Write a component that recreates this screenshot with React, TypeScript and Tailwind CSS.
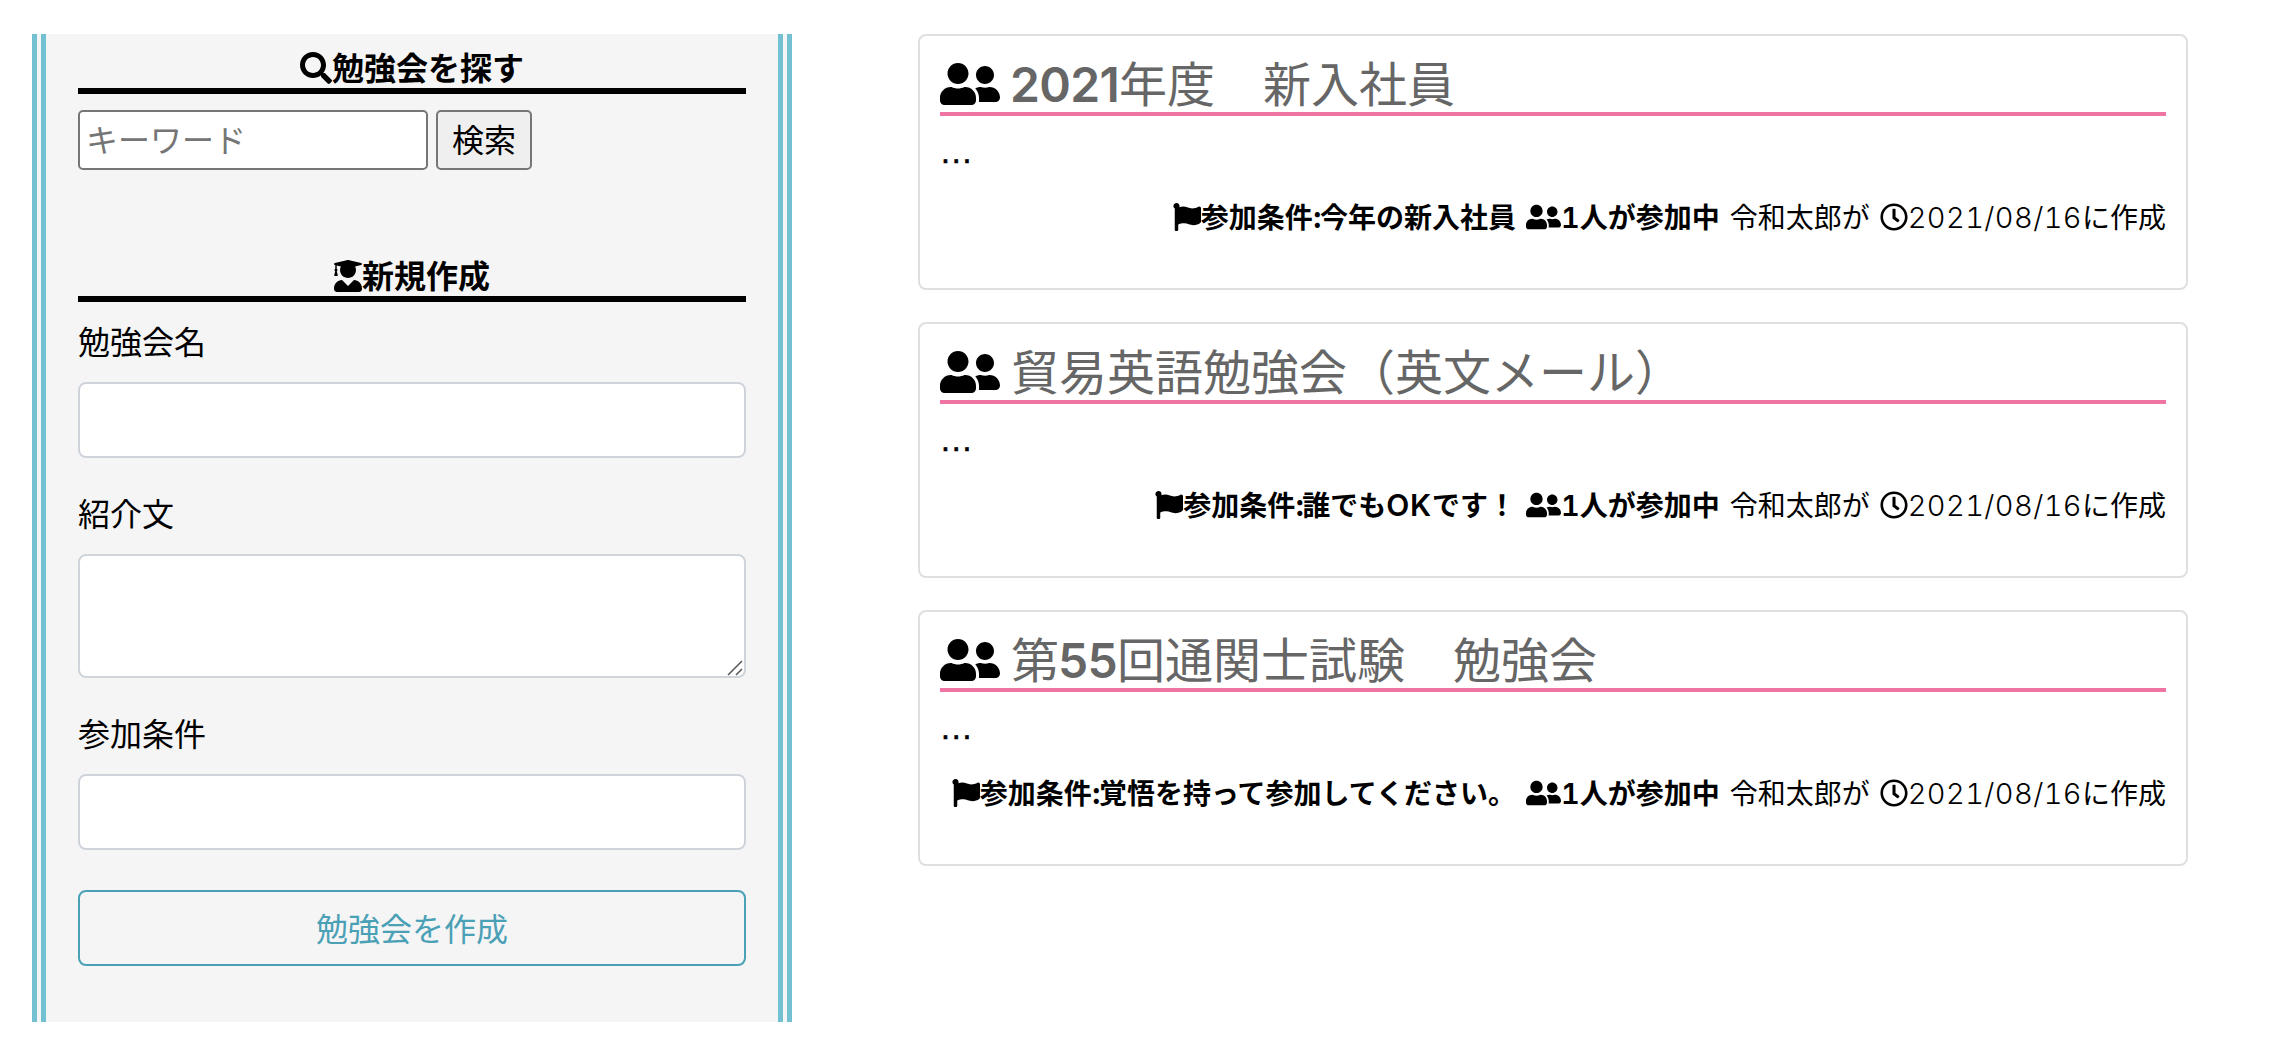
import React from "react";
import { FaSearch, FaUserGraduate, FaUserFriends, FaFlag, FaRegClock } from "react-icons/fa";

type Study = {
  title: React.ReactNode;
  condition: React.ReactNode;
};

function Digits({ children }: { children: string }) {
  return <span className="-ml-px font-['Inter'] leading-none font-semibold tracking-[-0.7px]">{children}</span>;
}

const studies: Study[] = [
  { title: <><Digits>2021</Digits>年度　新入社員</>, condition: "今年の新入社員" },
  { title: "貿易英語勉強会（英文メール）", condition: <>誰でも<span className="font-['Inter'] text-[30px] leading-none font-semibold tracking-[0.7px]">OK</span>です！</> },
  { title: <>第<Digits>55</Digits>回通関士試験　勉強会</>, condition: "覚悟を持って参加してください。" },
];

function SectionHeading({ icon, children }: { icon: React.ReactNode; children: string }) {
  return (
    <h2 className="flex h-[60px] items-end justify-center border-b-[6px] border-black text-[32px] leading-[40px] font-bold">
      <span className="flex h-[40px] items-center">{icon}</span>
      <span className="mb-0.5">{children}</span>
    </h2>
  );
}

function StudyCard({ title, condition }: Study) {
  return (
    <article className="h-[256px] rounded-lg border-2 border-[#dfdfdf] px-5">
      <h3 className="flex h-[80px] items-end gap-[11px] border-b-4 border-[#ef73a3] text-[48px] leading-[56px] text-[#666]">
        <FaUserFriends className="mb-1 h-12 w-[60px] text-black" />
        <span className="mb-[3px]">{title}</span>
      </h3>
      <p className="mt-3 h-12 pl-px font-['Liberation_Sans'] text-[32px] leading-[48px] tracking-[1.8px] [-webkit-text-stroke:0.6px_black]">...</p>
      <div className="mt-5 flex h-[42px] items-center justify-end gap-[10px] text-[28px] leading-[42px] whitespace-nowrap">
        <span className="flex items-center font-bold">
          <FaFlag className="size-7" />
          <span className="mb-0.5">参加条件<span className="tracking-[-2px]">:</span>{condition}</span>
        </span>
        <span className="flex items-center font-bold">
          <FaUserFriends className="h-7 w-[35px]" />
          <span className="mb-0.5"><span className="font-['Inter'] text-[29px] leading-none font-semibold tabular-nums">1</span>人が参加中</span>
        </span>
        <span className="mb-0.5">令和太郎が</span>
        <span className="flex items-center">
          <FaRegClock className="size-7" />
          <span className="mb-0.5"><span className="font-['Inter'] text-[29px] leading-none font-light tracking-[0.4px] tabular-nums">2021/08/16</span>に作成</span>
        </span>
      </div>
    </article>
  );
}

export default function App() {
  return (
    <div className="flex h-[1038px] w-[2274px] items-start bg-white pt-[34px] pl-8 font-['Noto_Sans_CJK_JP',sans-serif] text-black">
      <aside className="h-[988px] w-[760px] border-x-[14px] border-double border-[#72c2d1] bg-[#f5f5f5] px-8">
        <SectionHeading icon={<FaSearch className="size-8" />}>勉強会を探す</SectionHeading>
        <form className="mt-4 flex gap-2">
          <input
            type="text"
            placeholder="キーワード"
            className="h-[60px] w-[350px] rounded-[5px] border-2 border-[#767676] bg-white px-[6px] pb-1 text-[32px] leading-[48px] placeholder:text-[#757575]"
          />
          <button type="button" className="h-[60px] w-24 rounded-[5px] border-2 border-[#767676] bg-[#efefef] pb-1 text-[32px] leading-[48px]">
            検索
          </button>
        </form>
        <div className="mt-[72px]">
          <SectionHeading icon={<FaUserGraduate className="h-8 w-7" />}>新規作成</SectionHeading>
        </div>
        <form className="mt-4 flex flex-col">
          <label className="h-16 text-[32px] leading-[44px]">勉強会名</label>
          <input type="text" className="h-[76px] rounded-lg border-2 border-[#ced4da] bg-white px-6" />
          <label className="mt-8 h-16 text-[32px] leading-[44px]">紹介文</label>
          <div className="relative h-[124px]">
            <textarea className="block size-full resize-none rounded-lg border-2 border-[#ced4da] bg-white px-6" />
            <svg className="absolute right-[3px] bottom-[2px] size-4" viewBox="0 0 16 16" stroke="#555" strokeWidth="1.5">
              <path d="M1 15 15 1M9 15l6-6" />
            </svg>
          </div>
          <label className="mt-8 h-16 text-[32px] leading-[44px]">参加条件</label>
          <input type="text" className="h-[76px] rounded-lg border-2 border-[#ced4da] bg-white px-6" />
          <button type="button" className="mt-10 h-[76px] rounded-lg border-2 border-[#4aa0b5] pb-0.5 text-[32px] leading-[48px] text-[#4aa0b5]">
            勉強会を作成
          </button>
        </form>
      </aside>
      <main className="ml-[126px] flex w-[1270px] flex-col gap-8">
        {studies.map((study, i) => (
          <StudyCard key={i} {...study} />
        ))}
      </main>
    </div>
  );
}
